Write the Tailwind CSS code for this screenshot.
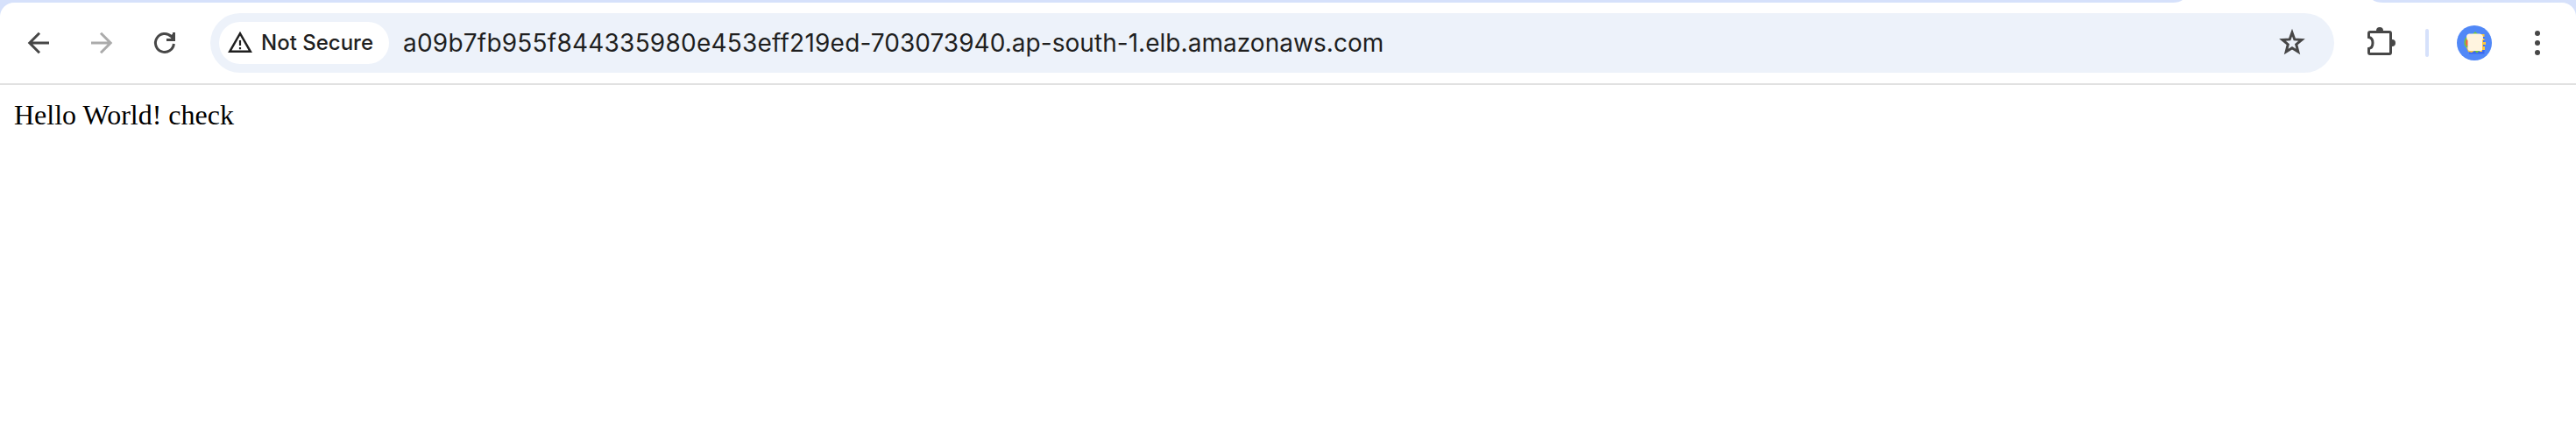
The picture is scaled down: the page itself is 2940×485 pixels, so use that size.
<!DOCTYPE html>
<html lang="en">
<head>
<meta charset="utf-8">
<title>Hello World</title>
<script src="https://cdn.jsdelivr.net/npm/@tailwindcss/browser@4"></script>
</head>
<body class="h-[485px] w-[2940px] overflow-hidden bg-white">
  <header class="bg-[#d6e1fb]">
    <div class="flex h-[3px] justify-end">
      <svg class="mr-[218px] h-[3px] w-[244px]" viewBox="0 0 244 3"><path d="M2 3Q9 3 13 0H230Q234 3 242 3Z" fill="#fff"/></svg>
    </div>
    <div class="flex h-[94px] items-center rounded-t-[16px] border-b-2 border-[#e1e1e1] bg-white pl-6">
      <svg class="size-10" viewBox="24 29 40 40" fill="none" stroke="#474747" stroke-width="3"><path d="M56 49H34M45 37.8L33.8 49L45 60.2"/></svg>
      <svg class="ml-8 size-10" viewBox="96 29 40 40" fill="none" stroke="#ababab" stroke-width="3"><path d="M104 49H126M115 37.8L126.200 49L115 60.200"/></svg>
      <svg class="ml-8 size-10" viewBox="168 29 40 40" fill="none" stroke="#474747" stroke-width="3"><path d="M198.400 50A10.500 10.500 0 1 1 195.400 41.600L198 44.500"/><path d="M190 45.500H198.500V37"/><path d="M194 41L198 38V46Z" fill="#474747" stroke="none"/></svg>

      <div class="ml-8 flex h-[68px] w-[2424px] items-center rounded-full bg-[#edf2fa] pl-[10px]">
        <div class="flex h-12 w-[194px] items-center rounded-full bg-white pl-2">
          <svg class="h-8 w-8" viewBox="258 33 32 32"><path d="M262.200 58.800L274 38.200L285.800 58.800Z" fill="none" stroke="#1f1f1f" stroke-width="2.500"/><path d="M272.900 46H275.100V52H272.900ZM272.900 54H275.100V56.200H272.900Z" fill="#1f1f1f"/></svg>
          <span class="ml-[8px] font-['Inter',sans-serif] text-[24px] leading-none font-medium whitespace-nowrap text-[#1f1f1f]">Not Secure</span>
        </div>
        <span class="ml-4 font-['Inter',sans-serif] text-[28px] leading-none tracking-[0.04px] whitespace-nowrap text-[#1f1f1f]"><span class="tracking-[0.22px]">a09b7fb955f844335980e453eff219ed</span>-703073940.ap-south-1.elb.amazonaws.com</span>
        <svg class="mr-7 ml-auto size-10" viewBox="2596 29 40 40"><path d="M2616 37.200L2618.800 44.900L2627 45.500L2620.700 50.700L2622.800 59L2616 54.700L2609.200 59L2611.300 50.700L2605 45.500L2613.200 44.900Z" fill="none" stroke="#474747" stroke-width="3"/></svg>
      </div>

      <svg class="ml-8 size-10" viewBox="2696 29 40 40"><path d="M2703.500 38Q2703.500 36.500 2705 36.500H2727Q2728.500 36.500 2728.500 38V60Q2728.500 61.500 2727 61.500H2705Q2703.500 61.500 2703.500 60V55.500C2709.500 54.500 2709.500 43.500 2703.500 42.500Z" fill="none" stroke="#474747" stroke-width="3"/><path d="M2712 36V35A4 4 0 0 1 2720 35V36ZM2729 45H2730A4 4 0 0 1 2730 53H2729Z" fill="#474747"/></svg>
      <div class="ml-8 h-8 w-1 rounded-full bg-[#d6e1fb]"></div>
      <svg class="ml-8 size-10" viewBox="2804 29 40 40">
        <circle cx="2824" cy="49" r="20" fill="#5188f7"/>
        <path d="M2818 57H2835.500V61.500H2818Z" fill="#3a68f0"/>
        <path d="M2833 42H2835.500V58H2833Z" fill="#3a68f0"/>
        <path d="M2814 43Q2812 46 2812.500 51L2815 55L2817 51V42ZM2822 39L2825 36L2828 39Z" fill="#75c83c"/>
        <path d="M2815 45L2818 43V53L2815 52Q2813 49 2815 45Z" fill="#ed6647"/>
        <path d="M2830 39H2835.500V42H2833V44H2835.500V46H2834V48H2837V51H2834V53H2836V57H2833V59H2830ZM2815 54L2817 59L2821 60L2824 58V55Z" fill="#fbc83d"/>
        <path d="M2823 57L2827 60.500L2831 57Z" fill="#75c83c"/>
        <path d="M2818 38.500H2830Q2834 39 2834 43Q2834 45 2833 46V57Q2832 58.500 2830 58H2819Q2816.500 58 2816.500 55V46Q2815 45 2815 42Q2815 39 2818 38.500Z" fill="#fff4df"/>
      </svg>
      <svg class="ml-8 size-10" viewBox="2876 29 40 40" fill="#474747"><circle cx="2896" cy="38" r="3"/><circle cx="2896" cy="49" r="3"/><circle cx="2896" cy="60" r="3"/></svg>
    </div>
  </header>
  <main class="px-4 pt-4 font-['Liberation_Serif',serif] text-[32px] leading-[36px] text-black">Hello World! check</main>
</body>
</html>
